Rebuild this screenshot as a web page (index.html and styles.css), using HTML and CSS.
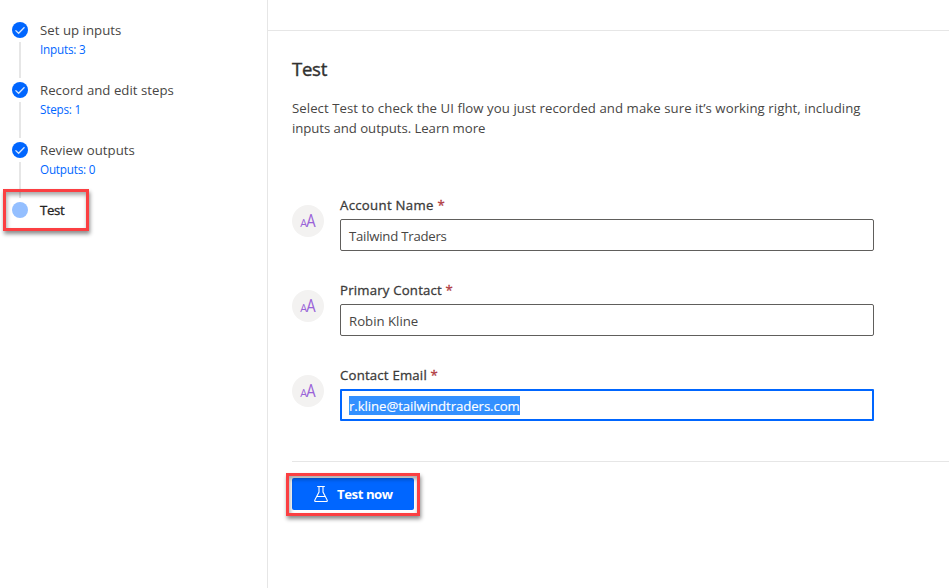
FILE: index.html
```html
<!DOCTYPE html>
<html lang="en">
<head>
<meta charset="utf-8">
<title>Test</title>
<link rel="stylesheet" href="styles.css">
</head>
<body>
<svg class="defs" width="0" height="0">
  <symbol id="check" viewBox="0 0 16 16"><circle cx="8" cy="8" r="8" fill="#0066ff"/><path d="M3.5 8.4 6.6 11.3 12.5 5.3" fill="none" stroke="#d9e8ff" stroke-width="1.3"/></symbol>
</svg>
<div class="app">
  <nav class="steps">
    <div class="step">
      <div class="rail"><svg class="dot"><use href="#check"/></svg><i class="line"></i></div>
      <div class="info"><div class="name"><span>Set up inputs</span></div><div class="count"><span>Inputs: 3</span></div></div>
    </div>
    <div class="step">
      <div class="rail"><svg class="dot"><use href="#check"/></svg><i class="line"></i></div>
      <div class="info"><div class="name"><span>Record and edit steps</span></div><div class="count"><span>Steps: 1</span></div></div>
    </div>
    <div class="step">
      <div class="rail"><svg class="dot"><use href="#check"/></svg><i class="line"></i></div>
      <div class="info"><div class="name"><span>Review outputs</span></div><div class="count"><span>Outputs: 0</span></div></div>
    </div>
    <div class="step current">
      <div class="rail"><i class="dot pending"></i></div>
      <div class="info"><div class="name"><span>Test</span></div></div>
      <div class="callout callout-step"></div>
    </div>
  </nav>
  <main>
    <header class="bar"></header>
    <section class="panel">
      <h1><span>Test</span></h1>
      <p class="intro"><span class="p1">Select Test to check the UI flow you just recorded and make sure it’s working right, including</span><br><span class="p2">inputs and outputs. Learn more</span></p>
      <div class="field">
        <svg class="type" viewBox="0 0 32 32"><circle cx="16" cy="16" r="16" fill="#f3f2f1"/><text x="8.2" y="21.6" font-size="11" textLength="6.8" lengthAdjust="spacingAndGlyphs">A</text><text x="14.2" y="21.6" font-size="17.5" textLength="9.4" lengthAdjust="spacingAndGlyphs">A</text></svg>
        <div class="control"><div class="label"><span class="l1">Account Name <b>*</b></span></div><div class="input"><span class="v1">Tailwind Traders</span></div></div>
      </div>
      <div class="field">
        <svg class="type" viewBox="0 0 32 32"><circle cx="16" cy="16" r="16" fill="#f3f2f1"/><text x="8.2" y="21.6" font-size="11" textLength="6.8" lengthAdjust="spacingAndGlyphs">A</text><text x="14.2" y="21.6" font-size="17.5" textLength="9.4" lengthAdjust="spacingAndGlyphs">A</text></svg>
        <div class="control"><div class="label"><span class="l2">Primary Contact <b>*</b></span></div><div class="input"><span>Robin Kline</span></div></div>
      </div>
      <div class="field">
        <svg class="type" viewBox="0 0 32 32"><circle cx="16" cy="16" r="16" fill="#f3f2f1"/><text x="8.2" y="21.6" font-size="11" textLength="6.8" lengthAdjust="spacingAndGlyphs">A</text><text x="14.2" y="21.6" font-size="17.5" textLength="9.4" lengthAdjust="spacingAndGlyphs">A</text></svg>
        <div class="control"><div class="label"><span class="l3">Contact Email <b>*</b></span></div><div class="input focused"><span class="selected">r.kline@tailwindtraders.com</span></div></div>
      </div>
      <footer class="actions">
        <div class="button">
          <svg class="flask" viewBox="0 0 16 18"><path d="M4.2 1.5H11.8M6 1.5V7L1.8 15.1Q1.4 16.5 2.7 16.5H13.3Q14.6 16.5 14.2 15.1L10 7V1.5M3.8 11.5H12.2" fill="none" stroke="#fff" stroke-width="1.1"/></svg>
          <span>Test now</span>
          <div class="callout callout-button"></div>
        </div>
      </footer>
    </section>
  </main>
</div>
</body>
</html>
```
FILE: styles.css
```css
* { box-sizing: border-box; }
body { margin: 0; background: #fff; color: #484644; font: 13.2px/20px "Open Sans", "Noto Sans", sans-serif; overflow: hidden; }
span { white-space: nowrap; }
.defs { position: absolute; }
.app { display: flex; width: 949px; height: 588px; }
.steps { width: 268px; flex: none; border-right: 1px solid #e6e6e6; padding: 20px 0 0 12px; }
.step { display: flex; height: 60px; position: relative; }
.rail { width: 16px; margin-right: 12px; padding-top: 2px; display: flex; flex-direction: column; align-items: center; }
.dot { display: block; width: 16px; height: 16px; flex: none; }
.pending { border-radius: 50%; background: #94bfff; }
.line { width: 2px; height: 36px; margin-top: 4px; background: #e6e6e6; }
.name { height: 20px; letter-spacing: .03px; }
.count { font-size: 11.7px; letter-spacing: -.2px; color: #0066ff; line-height: 19px; }
.current .name { color: #252423; -webkit-text-stroke: .3px #252423; letter-spacing: -.3px; }
.callout { position: absolute; border: 3px solid #fb3f42; box-shadow: 1px 3px 4px rgba(0,0,0,.45), inset 1px 3px 4px rgba(0,0,0,.35); }
.callout-step { left: -9px; top: -11px; width: 86px; height: 42px; }
main { flex: 1; min-width: 0; }
.bar { height: 31px; border-bottom: 1px solid #e6e6e6; }
.panel { padding: 24px 0 0 24px; }
h1 { margin: 0; font-size: 18.6px; line-height: 28px; font-weight: 400; letter-spacing: -.3px; color: #323130; -webkit-text-stroke: .4px #323130; }
.intro { margin: 15px 0 57px; }
.p1 { letter-spacing: .06px; }
.p2 { letter-spacing: -.06px; }
.field { display: flex; height: 85px; }
.type { width: 32px; height: 32px; margin: 10px 16px 0 0; fill: #9a63d8; font-family: "Open Sans", sans-serif; font-weight: 400; }
.control { width: 534px; }
.label { height: 24px; color: #3b3a39; -webkit-text-stroke: .3px; }
.label b { color: #b13a40; font-weight: 400; }
.l1 { letter-spacing: .3px; }
.l2, .l3 { letter-spacing: .2px; }
.input { height: 32px; border: 1px solid #605e5c; border-radius: 2px; padding: 8px 8px 6px; line-height: 20px; display: flex; align-items: center; }
.v1 { letter-spacing: -.24px; }
.focused { border: 2px solid #0066ff; padding: 5px 7px 4px; border-radius: 1px; }
.selected { background: #3390ff; color: #fff; height: 19px; line-height: 20px; letter-spacing: -.07px; -webkit-text-stroke: .15px #fff; }
.actions { border-top: 1px solid #e6e6e6; margin-top: 11px; padding-top: 16px; }
.button { position: relative; width: 122px; height: 32px; border-radius: 2px; background: #0066ff; color: #fff; display: flex; align-items: center; padding-left: 21px; font-weight: 700; letter-spacing: -.45px; }
.flask { width: 16px; height: 18px; margin-right: 8px; }
.callout-button { left: -6px; top: -5px; width: 134px; height: 43px; }
```
